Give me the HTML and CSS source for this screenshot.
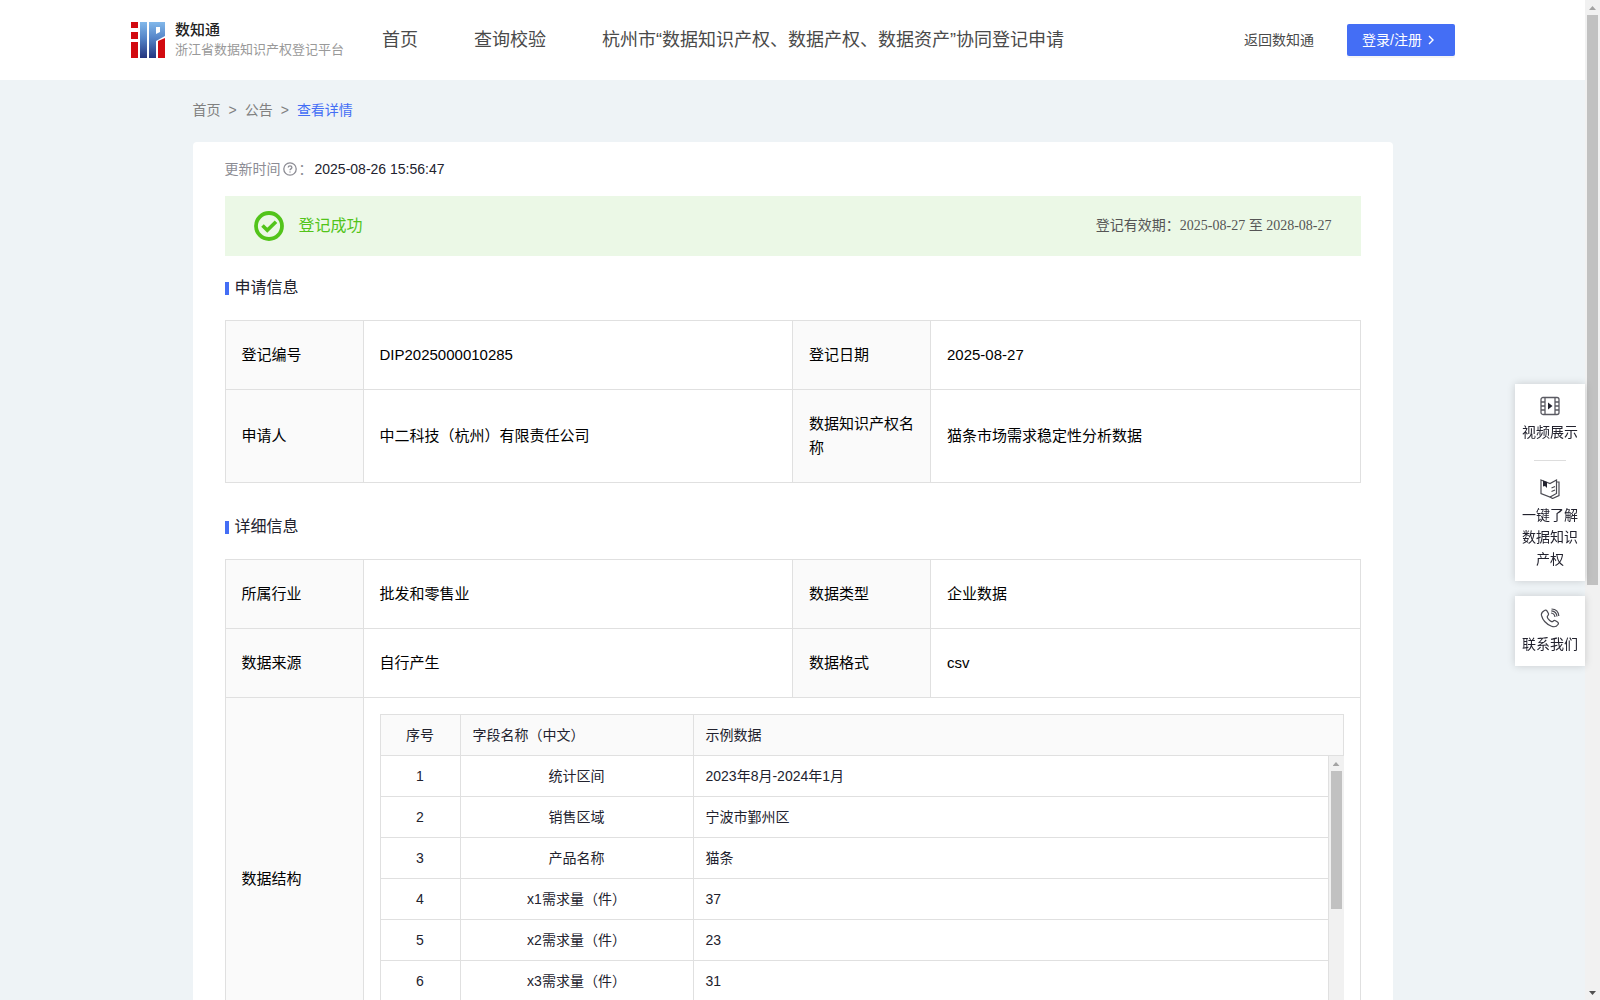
FILE: index.html
```html
<!DOCTYPE html>
<html lang="zh-CN">
<head>
    <meta charset="UTF-8">
    <meta name="viewport" content="width=device-width, initial-scale=1.0">
    <title>浙江省数据知识产权登记平台</title>
    <link rel="stylesheet" href="styles.css">
</head>
<body>

<div class="page">
    <header class="header">
        <a class="logo" href="#">
            <svg width="34" height="36" viewBox="0 0 34 36">
                <defs>
                    <linearGradient id="logo-blue" x1="0" y1="0" x2="0" y2="1">
                        <stop offset="0" stop-color="#82b8ea"/>
                        <stop offset="0.45" stop-color="#5585c8"/>
                        <stop offset="1" stop-color="#25357f"/>
                    </linearGradient>
                </defs>
                <path fill="#d20a10" d="M0 0h7v6H0zM0 10h7v7H0zM0 20h7v16H0zM27 19l7-3v20h-7z"/>
                <path fill="url(#logo-blue)" d="M9 0h7v36H9zM18 0h16v14l-9 5v17h-7zM25 5v7l4-2V5z" fill-rule="evenodd"/>
            </svg>
            <span class="logo-text">
                <strong>数知通</strong>
                <small>浙江省数据知识产权登记平台</small>
            </span>
        </a>
        <nav class="nav">
            <a href="#">首页</a>
            <a href="#">查询校验</a>
            <a href="#">杭州市“数据知识产权、数据产权、数据资产”协同登记申请</a>
        </nav>
        <a class="back-link" href="#">返回数知通</a>
        <button class="login-btn" type="button">
            登录/注册
            <svg width="12" height="12" viewBox="0 0 12 12" fill="none" stroke="#fff" stroke-width="1.4"><path d="M4 2l4 4-4 4"/></svg>
        </button>
    </header>

    <main class="container">
        <div class="breadcrumb">
            <a href="#">首页</a>
            <span>&gt;</span>
            <a href="#">公告</a>
            <span>&gt;</span>
            <a class="current" href="#">查看详情</a>
        </div>

        <div class="card">
            <div class="update-time">
                <span class="label">更新时间</span>
                <svg width="14" height="14" viewBox="0 0 14 14" fill="none" stroke="#8c8c94" stroke-width="1.3">
                    <circle cx="7" cy="7" r="6.2"/>
                    <path d="M5.2 5.6c0-2.3 3.7-2.3 3.7 0C8.900 6.900 7 6.900 7 8.300M7 9.400v1.200"/>
                </svg>
                <span class="label colon">：</span>
                <span>2025-08-26 15:56:47</span>
            </div>

            <div class="banner">
                <svg width="30" height="30" viewBox="0 0 30 30" fill="none" stroke="#52c41a">
                    <circle cx="15" cy="15" r="13" stroke-width="3.800"/>
                    <path d="M8.500 14.500l4.800 4.800 8.700-8.500" stroke-width="3.600"/>
                </svg>
                <span class="banner-status">登记成功</span>
                <span class="banner-date">登记有效期：2025-08-27 至 2028-08-27</span>
            </div>

            <h2>申请信息</h2>
            <table class="info">
                <colgroup><col class="col-label"><col><col class="col-label"><col></colgroup>
                <tr>
                    <th>登记编号</th>
                    <td>DIP2025000010285</td>
                    <th>登记日期</th>
                    <td>2025-08-27</td>
                </tr>
                <tr>
                    <th>申请人</th>
                    <td>中二科技（杭州）有限责任公司</td>
                    <th>数据知识产权名称</th>
                    <td>猫条市场需求稳定性分析数据</td>
                </tr>
            </table>

            <h2>详细信息</h2>
            <table class="info">
                <colgroup><col class="col-label"><col><col class="col-label"><col></colgroup>
                <tr>
                    <th>所属行业</th>
                    <td>批发和零售业</td>
                    <th>数据类型</th>
                    <td>企业数据</td>
                </tr>
                <tr>
                    <th>数据来源</th>
                    <td>自行产生</td>
                    <th>数据格式</th>
                    <td>csv</td>
                </tr>
                <tr>
                    <th>数据结构</th>
                    <td class="nested" colspan="3">
                        <table class="fields fields-head">
                            <colgroup><col class="col-no"><col class="col-name"><col></colgroup>
                            <tr><th class="center">序号</th><th>字段名称（中文）</th><th>示例数据</th></tr>
                        </table>
                        <div class="fields-body">
                            <table class="fields">
                                <colgroup><col class="col-no"><col class="col-name"><col></colgroup>
                                <tr><td>1</td><td>统计区间</td><td>2023年8月-2024年1月</td></tr>
                                <tr><td>2</td><td>销售区域</td><td>宁波市鄞州区</td></tr>
                                <tr><td>3</td><td>产品名称</td><td>猫条</td></tr>
                                <tr><td>4</td><td>x1需求量（件）</td><td>37</td></tr>
                                <tr><td>5</td><td>x2需求量（件）</td><td>23</td></tr>
                                <tr><td>6</td><td>x3需求量（件）</td><td>31</td></tr>
                                <tr><td>7</td><td>x4需求量（件）</td><td>28</td></tr>
                            </table>
                            <div class="scrollbar">
                                <i class="arrow up"></i>
                                <i class="thumb thumb-table"></i>
                                <i class="arrow down"></i>
                            </div>
                        </div>
                    </td>
                </tr>
            </table>
        </div>
    </main>
</div>

<div class="scrollbar">
    <i class="arrow up"></i>
    <i class="thumb thumb-page"></i>
    <i class="arrow down dark"></i>
</div>

<!-- floating shortcuts -->
<aside class="side">
    <div class="side-box">
        <a href="#">
            <svg width="20" height="20" viewBox="0 0 20 20" fill="none" stroke="#5a5a62" stroke-width="1.300">
                <rect x="1" y="1.500" width="18" height="17" rx="2"/>
                <path d="M5 1.500v17M15 1.500v17M1 6h4M1 10h4M1 14h4M15 6h4M15 10h4M15 14h4"/>
                <path d="M8 6.500l4.500 3.500L8 13.500z" fill="#22222e" stroke="none"/>
            </svg>
            视频展示
        </a>
        <hr>
        <a href="#">
            <svg width="20" height="20" viewBox="0 0 20 20" fill="none" stroke="#4a4a52" stroke-width="1.200">
                <path d="M1 1l9 3.500L16.500 1v13.500L10 18l-9-3.500z"/>
                <path d="M17 3h2v13.500L12.500 19.500 10 18M11.500 9l3.500-1.500M11.500 12.500l3.500-1.500"/>
                <path d="M3 1.500l4 1.500v6L5 7 3 7.500z" fill="#22222e" stroke="none"/>
            </svg>
            一键了解数据知识产权
        </a>
    </div>
    <div class="side-box">
        <a href="#">
            <svg width="20" height="20" viewBox="0 0 20 20" fill="none" stroke="#4a4a52" stroke-width="1.200">
                <path d="M4.500 2.500c1-.8 2-.4 2.600.6l1.200 2.200c.5 1 .2 1.700-.5 2.400-1 .9-.8 1.500.2 2.900 1 1.300 2.200 2.400 3.500 3 .8.300 1.200 0 1.800-.6.600-.7 1.400-.8 2.200-.3l2 1.300c1 .7 1.200 1.500.5 2.500-1.500 2.200-3.700 2.800-6.500 1.700C6.500 16.200 2.600 11.700 1.500 7.500 1 5.300 2.500 3.600 4.500 2.500z"/>
                <path d="M11 5c2.300.2 3.600 1.500 4 4M11.300 2.800c3.300.2 5.400 2.300 5.700 5.700M11.500 1c4.500.2 7 2.700 7.300 7"/>
            </svg>
            联系我们
        </a>
    </div>
</aside>

</body>
</html>
```
FILE: styles.css
```css
* {
    box-sizing: border-box;
}

body {
    margin: 0;
    display: flex;
    height: 100vh;
    overflow: hidden;
    font-family: "Liberation Sans", "Noto Sans CJK SC", sans-serif;
    font-size: 14px;
    line-height: 22px;
    color: #22222e;
    background: #eef3f6;
}

a {
    color: inherit;
    text-decoration: none;
}

.page {
    flex: 1;
    min-width: 0;
    overflow: hidden;
}

/* header */
.header {
    display: flex;
    align-items: center;
    height: 80px;
    padding: 0 130px 0 131px;
    background: #fff;
    color: #4a4a4a;
    white-space: nowrap;
}

.logo {
    display: flex;
    align-items: center;
    gap: 10px;
    width: 251px;
}

.logo-text strong,
.logo-text small {
    display: block;
    line-height: 20px;
}

.logo-text strong {
    font-size: 15px;
    font-weight: 500;
    color: #222;
}

.logo-text small {
    font-size: 13px;
    color: #999;
}

.nav {
    display: flex;
    gap: 56px;
    font-size: 18px;
}

.back-link {
    margin-left: auto;
}

.login-btn {
    display: flex;
    align-items: center;
    gap: 3px;
    width: 108px;
    height: 32px;
    margin-left: 33px;
    padding: 0 15px;
    border: none;
    border-radius: 2px;
    background: #446ef5;
    box-shadow: 0 2px 0 rgba(0, 0, 0, 0.04);
    color: #fff;
    font: inherit;
    cursor: pointer;
}

/* content */
.container {
    max-width: 1200px;
    margin: 0 auto;
}

.breadcrumb {
    display: flex;
    gap: 8px;
    padding: 19px 0 21px;
    color: #808080;
}

.breadcrumb .current {
    color: #446ef5;
}

.card {
    padding: 16px 32px;
    border-radius: 4px;
    background: #fff;
}

.update-time {
    display: flex;
    align-items: center;
    gap: 2px;
}

.update-time .label {
    color: #8c8c94;
}

.update-time .colon {
    width: 14px;
}

.banner {
    display: flex;
    align-items: center;
    height: 60px;
    margin: 16px 0 20px;
    padding: 0 29px;
    background: #ebf8e6;
}

.banner-status {
    margin-left: 15px;
    font-size: 16px;
    color: #52c41a;
}

.banner-date {
    margin-left: auto;
    font-family: "Liberation Serif", "Noto Sans CJK SC", serif;
    color: #555;
}

h2 {
    display: flex;
    align-items: center;
    gap: 6px;
    margin: 0 0 20px;
    font-size: 16px;
    font-weight: 400;
    line-height: 24px;
}

h2::before {
    content: "";
    width: 4px;
    height: 13px;
    background: #446ef5;
}

table {
    width: 100%;
    border-collapse: collapse;
    table-layout: fixed;
}

th,
td {
    border: 1px solid #e0e0e0;
    font-weight: 400;
    text-align: left;
}

th {
    background: #fafafa;
}

.info {
    margin-bottom: 32px;
    font-size: 15px;
    line-height: 24px;
    color: #000;
}

.info > tbody > tr > th,
.info > tbody > tr > td {
    padding: 22px 16px;
}

.info > tbody > tr > .nested {
    padding: 16px;
}

.col-label {
    width: 138px;
}

/* field list inside the detail table */
.fields {
    font-size: 14px;
    line-height: 22px;
    color: #22222e;
}

.fields th,
.fields td {
    height: 41px;
    padding: 9px 12px;
}

.fields .center,
.fields td:nth-child(-n+2) {
    text-align: center;
}

.col-no {
    width: 80px;
}

.col-name {
    width: 233px;
}

.fields-body {
    display: flex;
}

/* share the border with the head row */
.fields-body .fields {
    margin-top: -1px;
}

/* scrollbars */
.scrollbar {
    display: flex;
    flex-direction: column;
    flex: 0 0 15px;
    background: #f1f1f1;
}

.arrow {
    width: 7px;
    height: 4px;
    margin: 6px 4px 5px;
    background: #a3a3a3;
}

.arrow.up {
    clip-path: polygon(50% 0, 100% 100%, 0 100%);
}

.arrow.down {
    margin-top: auto;
    clip-path: polygon(0 0, 100% 0, 50% 100%);
}

.arrow.dark {
    background: #505050;
}

.thumb {
    margin: 0 2px;
    background: #c1c1c1;
}

.thumb-table {
    height: 48%;
}

.thumb-page {
    height: 57%;
}

/* floating shortcuts */
.side {
    position: fixed;
    top: 384px;
    right: 15px;
    width: 70px;
}

.side-box {
    margin-bottom: 15px;
    padding: 12px 7px 11px;
    background: #fff;
    box-shadow: 0 0 8px rgba(0, 0, 0, 0.16);
    text-align: center;
}

.side-box a {
    display: block;
}

.side-box svg {
    display: block;
    margin: 0 auto 5px;
}

.side-box hr {
    width: 32px;
    margin: 17px auto 18px;
    border: none;
    border-top: 1px solid #ddd;
}
```
